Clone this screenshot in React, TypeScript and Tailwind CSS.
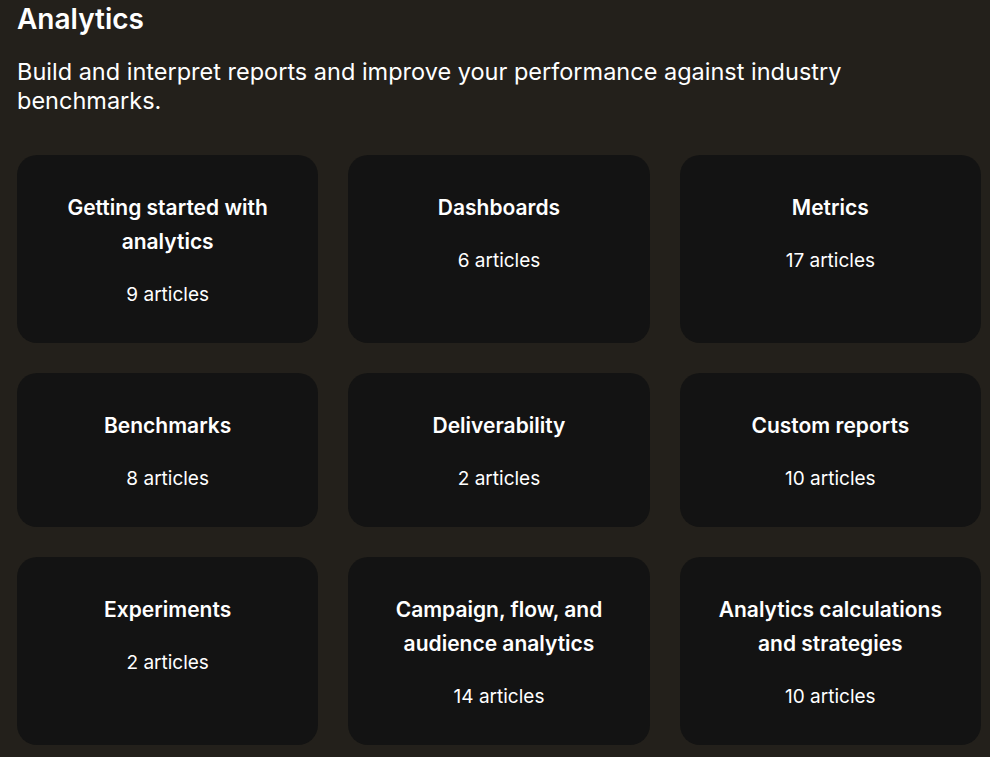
const categories = [
  { title: 'Getting started with analytics', count: 9 },
  { title: 'Dashboards', count: 6 },
  { title: 'Metrics', count: 17 },
  { title: 'Benchmarks', count: 8 },
  { title: 'Deliverability', count: 2 },
  { title: 'Custom reports', count: 10 },
  { title: 'Experiments', count: 2 },
  { title: 'Campaign, flow, and audience analytics', count: 14 },
  { title: 'Analytics calculations and strategies', count: 10 },
]

export default function App() {
  return (
    <div
      className="min-h-[757px] bg-[#23201b] text-white px-[17px] pt-px pb-10"
      style={{ fontFamily: 'Inter, "Liberation Sans", sans-serif' }}
    >
      <h1 className="text-[28px] leading-[36px] font-semibold">Analytics</h1>
      <p className="mt-[20px] text-[23.5px] leading-[29px] max-w-[860px]">
        Build and interpret reports and improve your performance against industry benchmarks.
      </p>

      <div className="mt-[40px] grid grid-cols-3 gap-[30px] w-[964px]">
        {categories.map((c) => (
          <a
            key={c.title}
            href="#"
            className="flex flex-col items-center text-center rounded-[20px] bg-[#131313] px-[36px] pt-[36px] pb-[34px]"
          >
            <div className="text-[21px] leading-[34px] font-semibold">{c.title}</div>
            <div className="mt-[22px] text-[19px] leading-[28px]">{c.count} articles</div>
          </a>
        ))}
      </div>
    </div>
  )
}
